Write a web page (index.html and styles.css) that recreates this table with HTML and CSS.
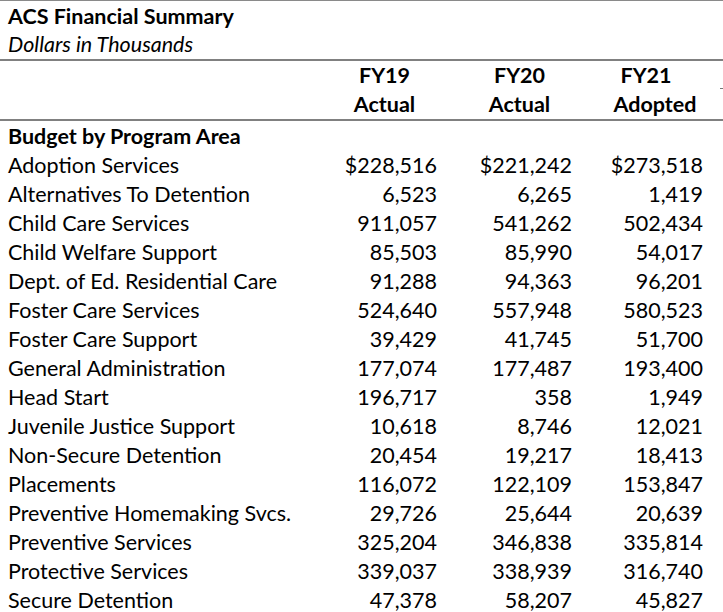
FILE: index.html
```
<!DOCTYPE html>
<html lang="en">
<head>
<meta charset="utf-8">
<title>ACS Financial Summary</title>
<link rel="stylesheet" href="styles.css">
</head>
<body>
<div class="sheet">
  <div class="title-block">
    <div class="title">ACS Financial Summary</div>
    <div class="subtitle">Dollars in Thousands</div>
  </div>
  <div class="grid header">
    <div class="cell"></div>
    <div class="cell hd">FY19</div>
    <div class="cell hd">FY20</div>
    <div class="cell hd fy21">FY21</div>
    <div class="cell"></div>
    <div class="cell hd">Actual</div>
    <div class="cell hd">Actual</div>
    <div class="cell hd">Adopted</div>
  </div>
  <div class="grid body">
    <div class="cell label section">Budget by Program Area</div><div class="cell num"></div><div class="cell num"></div><div class="cell num"></div>
    <div class="cell label">Adoption Services</div><div class="cell num">$228,516</div><div class="cell num">$221,242</div><div class="cell num">$273,518</div>
    <div class="cell label">Alternatives To Detention</div><div class="cell num">6,523</div><div class="cell num">6,265</div><div class="cell num">1,419</div>
    <div class="cell label">Child Care Services</div><div class="cell num">911,057</div><div class="cell num">541,262</div><div class="cell num">502,434</div>
    <div class="cell label">Child Welfare Support</div><div class="cell num">85,503</div><div class="cell num">85,990</div><div class="cell num">54,017</div>
    <div class="cell label">Dept. of Ed. Residential Care</div><div class="cell num">91,288</div><div class="cell num">94,363</div><div class="cell num">96,201</div>
    <div class="cell label">Foster Care Services</div><div class="cell num">524,640</div><div class="cell num">557,948</div><div class="cell num">580,523</div>
    <div class="cell label">Foster Care Support</div><div class="cell num">39,429</div><div class="cell num">41,745</div><div class="cell num">51,700</div>
    <div class="cell label">General Administration</div><div class="cell num">177,074</div><div class="cell num">177,487</div><div class="cell num">193,400</div>
    <div class="cell label">Head Start</div><div class="cell num">196,717</div><div class="cell num">358</div><div class="cell num">1,949</div>
    <div class="cell label">Juvenile Justice Support</div><div class="cell num">10,618</div><div class="cell num">8,746</div><div class="cell num">12,021</div>
    <div class="cell label">Non-Secure Detention</div><div class="cell num">20,454</div><div class="cell num">19,217</div><div class="cell num">18,413</div>
    <div class="cell label">Placements</div><div class="cell num">116,072</div><div class="cell num">122,109</div><div class="cell num">153,847</div>
    <div class="cell label">Preventive Homemaking Svcs.</div><div class="cell num">29,726</div><div class="cell num">25,644</div><div class="cell num">20,639</div>
    <div class="cell label">Preventive Services</div><div class="cell num">325,204</div><div class="cell num">346,838</div><div class="cell num">335,814</div>
    <div class="cell label">Protective Services</div><div class="cell num">339,037</div><div class="cell num">338,939</div><div class="cell num">316,740</div>
    <div class="cell label">Secure Detention</div><div class="cell num">47,378</div><div class="cell num">58,207</div><div class="cell num">45,827</div>
  </div>
</div>
</body>
</html>
```
FILE: styles.css
```
html, body {
  margin: 0;
  padding: 0;
  background: #fff;
}
body {
  font-family: Lato, "Open Sans", "Liberation Sans", sans-serif;
  font-size: 21.5px;
  color: #000;
}
.sheet {
  width: 723px;
  position: relative;
}
.title-block {
  border-top: 1px solid #8a8a8a;
  border-bottom: 2px solid #808080;
  padding-left: 8px;
}
.title, .subtitle {
  height: 29px;
  line-height: 29px;
  white-space: nowrap;
}
.title {
  font-weight: bold;
  padding-top: 2px;
  height: 27px;
  line-height: 27px;
}
.subtitle {
  font-style: italic;
}
.grid {
  display: grid;
  grid-template-columns: 317px 135px 135px 136px;
  grid-auto-rows: 29px;
}
.header {
  border-bottom: 2px solid #808080;
  position: relative;
}
.header::after {
  content: "";
  position: absolute;
  right: 0;
  top: 27px;
  width: 3px;
  height: 1px;
  background: #777;
}
.cell {
  line-height: 29px;
  white-space: nowrap;
}
.body .cell {
  padding-top: 1px;
}
.hd {
  font-weight: bold;
  text-align: center;
}
.fy21 {
  padding-right: 18px;
}
.label {
  padding-left: 8px;
}
.section {
  font-weight: bold;
}
.num {
  text-align: right;
  padding-right: 15px;
}
.num:nth-child(4n) {
  padding-right: 20px;
}
```
